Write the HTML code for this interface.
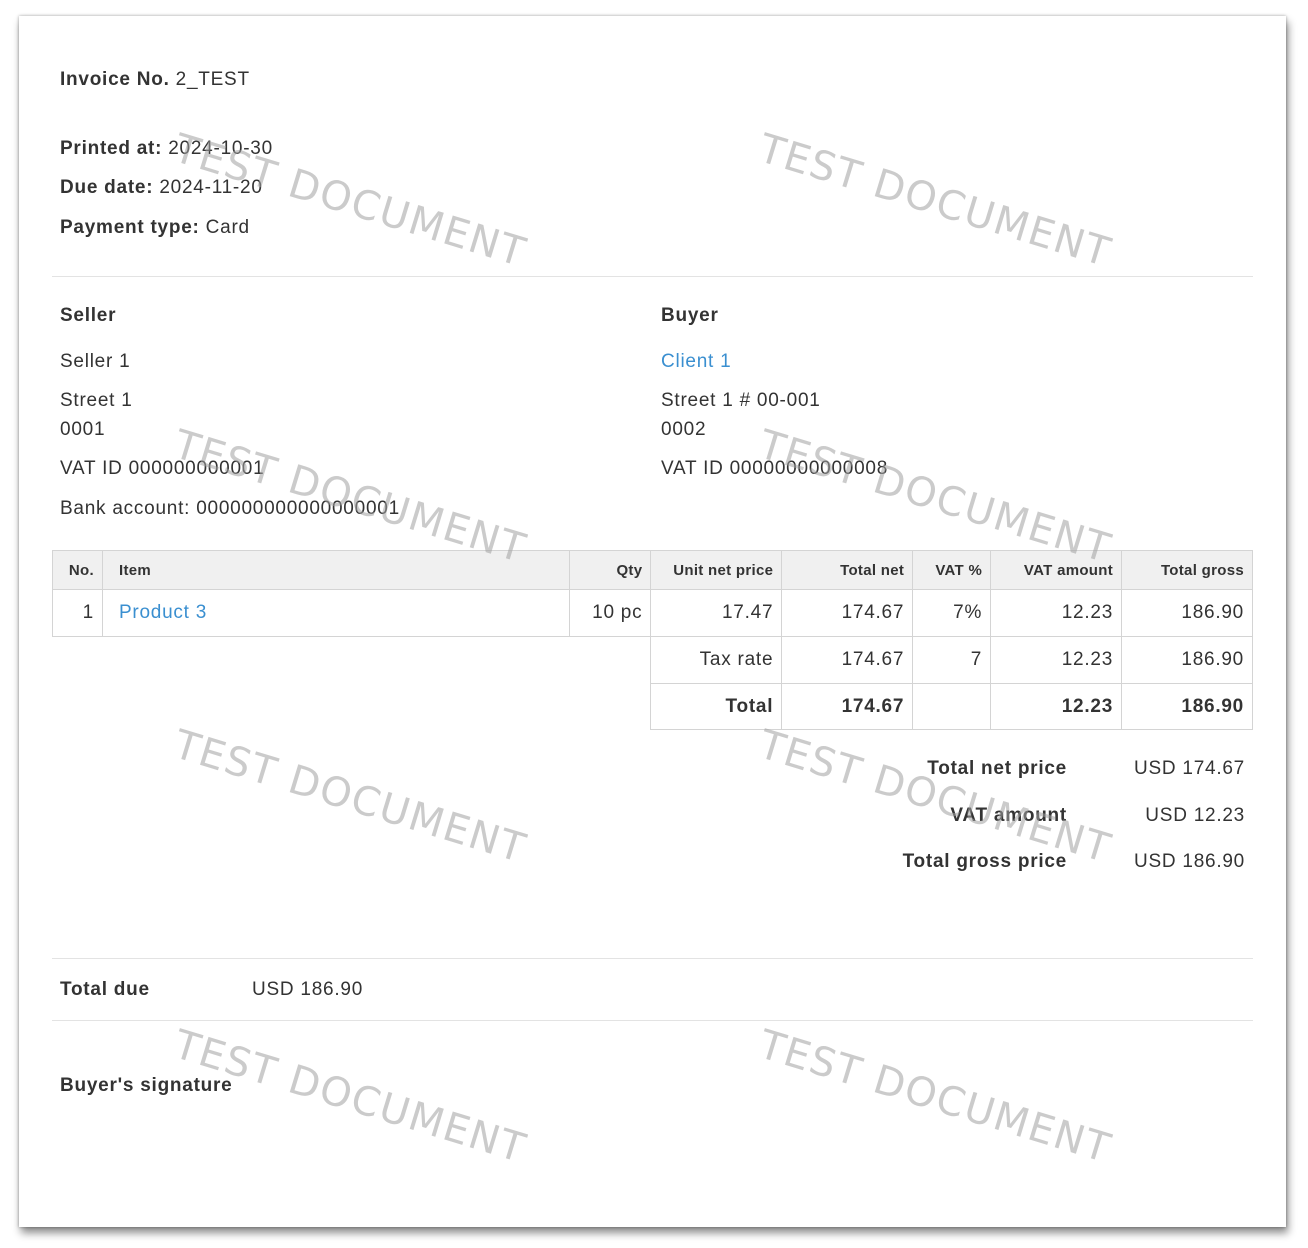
<!DOCTYPE html>
<html><head><meta charset="utf-8">
<style>
html,body{margin:0;padding:0;background:#fff;width:1308px;height:1248px;overflow:hidden;}
body{font-family:"Liberation Sans",Arial,sans-serif;color:#333;position:relative;}
.card{position:absolute;left:19px;top:16px;width:1267px;height:1211px;background:#fff;box-shadow:0 0 3px rgba(0,0,0,.35),2px 6px 8px rgba(0,0,0,.45);}
.t{position:absolute;font-size:19px;letter-spacing:0.75px;line-height:20px;white-space:nowrap;}
b{font-weight:bold;}
.hr{position:absolute;left:52px;width:1201px;height:1px;background:#e3e3e3;}
a{color:#3a8fd0;text-decoration:none;}
table{position:absolute;border-collapse:collapse;font-size:19px;letter-spacing:0.75px;}
td,th{border:1px solid #d4d4d4;padding:0 8px;text-align:right;}
th{background:#f0f0f0;font-size:15px;letter-spacing:0.3px;font-weight:bold;height:38px;}
.l{text-align:left;padding-left:16px;}
.wm{position:absolute;font-family:"DejaVu Sans",sans-serif;font-size:40px;color:rgba(160,160,160,.55);letter-spacing:1.5px;white-space:nowrap;transform:translate(-50%,-50%) rotate(17deg);}
</style></head><body>
<div class="card"></div>
<div class="t" style="left:60px;top:70px"><b>Invoice No.</b> 2_TEST</div>
<div class="t" style="left:60px;top:139px"><b>Printed at:</b> 2024-10-30</div>
<div class="t" style="left:60px;top:178px"><b>Due date:</b> 2024-11-20</div>
<div class="t" style="left:60px;top:218px"><b>Payment type:</b> Card</div>
<div class="hr" style="top:276px"></div>
<div class="t" style="left:60px;top:306px"><b>Seller</b></div>
<div class="t" style="left:60px;top:352px">Seller 1</div>
<div class="t" style="left:60px;top:391px">Street 1</div>
<div class="t" style="left:60px;top:420px">0001</div>
<div class="t" style="left:60px;top:459px">VAT ID 000000000001</div>
<div class="t" style="left:60px;top:499px">Bank account: 000000000000000001</div>
<div class="t" style="left:661px;top:306px"><b>Buyer</b></div>
<div class="t" style="left:661px;top:352px"><a>Client 1</a></div>
<div class="t" style="left:661px;top:391px">Street 1 # 00-001</div>
<div class="t" style="left:661px;top:420px">0002</div>
<div class="t" style="left:661px;top:459px">VAT ID 00000000000008</div>

<table style="left:52px;top:550px;width:1201px;">
<colgroup><col style="width:50px"><col style="width:468px"><col style="width:81px"><col style="width:131px"><col style="width:131px"><col style="width:78px"><col style="width:131px"><col style="width:131px"></colgroup>
<tr><th>No.</th><th class="l">Item</th><th>Qty</th><th>Unit net price</th><th>Total net</th><th>VAT %</th><th>VAT amount</th><th>Total gross</th></tr>
<tr style="height:47px"><td>1</td><td class="l"><a>Product 3</a></td><td>10 pc</td><td>17.47</td><td>174.67</td><td>7%</td><td>12.23</td><td>186.90</td></tr>
<tr style="height:47px"><td colspan="3" style="border:none;border-top:1px solid #d4d4d4"></td><td>Tax rate</td><td>174.67</td><td>7</td><td>12.23</td><td>186.90</td></tr>
<tr style="height:46px;font-weight:bold"><td colspan="3" style="border:none"></td><td>Total</td><td>174.67</td><td></td><td>12.23</td><td>186.90</td></tr>
</table>

<div class="t" style="right:241px;top:759px"><b>Total net price</b></div>
<div class="t" style="right:63px;top:759px">USD 174.67</div>
<div class="t" style="right:241px;top:806px"><b>VAT amount</b></div>
<div class="t" style="right:63px;top:806px">USD 12.23</div>
<div class="t" style="right:241px;top:852px"><b>Total gross price</b></div>
<div class="t" style="right:63px;top:852px">USD 186.90</div>

<div class="hr" style="top:958px"></div>
<div class="t" style="left:60px;top:980px"><b>Total due</b></div>
<div class="t" style="left:252px;top:980px">USD 186.90</div>
<div class="hr" style="top:1020px"></div>
<div class="t" style="left:60px;top:1076px"><b>Buyer's signature</b></div>

<div class="wm" style="left:350px;top:201px">TEST DOCUMENT</div>
<div class="wm" style="left:935px;top:201px">TEST DOCUMENT</div>
<div class="wm" style="left:350px;top:497px">TEST DOCUMENT</div>
<div class="wm" style="left:935px;top:497px">TEST DOCUMENT</div>
<div class="wm" style="left:350px;top:797px">TEST DOCUMENT</div>
<div class="wm" style="left:935px;top:797px">TEST DOCUMENT</div>
<div class="wm" style="left:350px;top:1097px">TEST DOCUMENT</div>
<div class="wm" style="left:935px;top:1097px">TEST DOCUMENT</div>
</body></html>
